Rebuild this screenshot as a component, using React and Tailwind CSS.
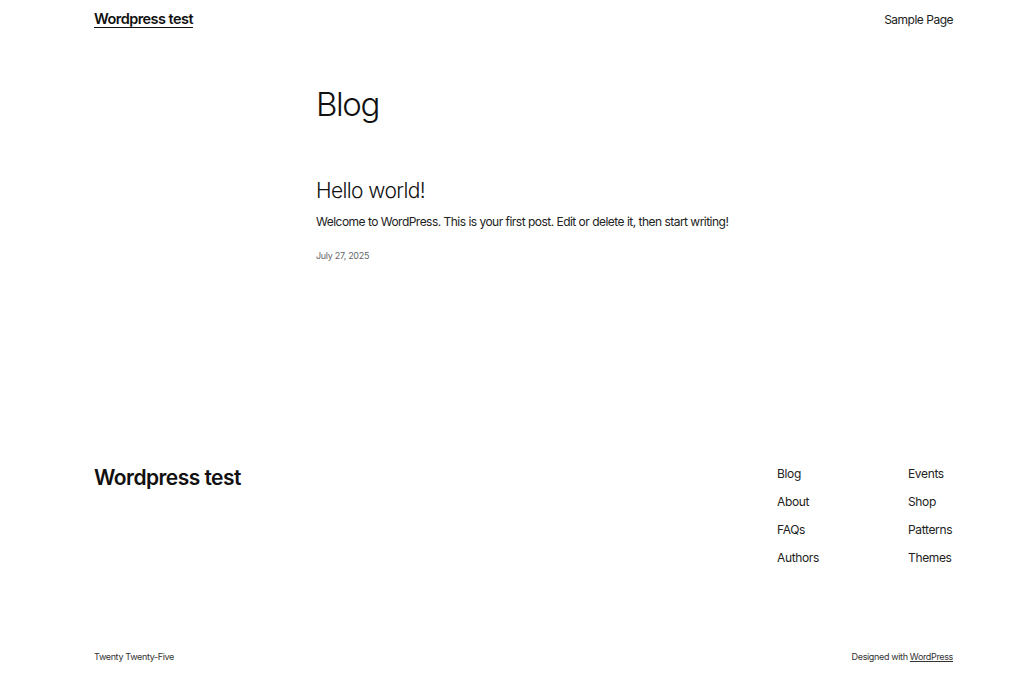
export default function App() {
  const navLeft = ['Blog', 'About', 'FAQs', 'Authors'];
  const navRight = ['Events', 'Shop', 'Patterns', 'Themes'];

  return (
    <div className="min-h-[673px] bg-white text-[#111111] flex flex-col" style={{ fontFamily: 'Inter, "Noto Sans", sans-serif' }}>
      <header className="flex items-center justify-between pl-[94px] pr-[71px] h-[38px]">
        <a href="#" className="text-[14.5px] font-semibold underline underline-offset-[3px] tracking-[-0.55px]">Wordpress test</a>
        <a href="#" className="text-[12px] text-[#222] tracking-[-0.5px] pt-[1px]">Sample Page</a>
      </header>

      <main className="pl-[316px] pr-[71px]">
        <h1 className="text-[33px] font-light leading-none mt-[50px] tracking-[-1.4px]">Blog</h1>
        <h2 className="text-[21px] font-light leading-none mt-[59px] tracking-[-0.6px]">Hello world!</h2>
        <p className="text-[12px] text-[#222] mt-[12px] leading-[18px] tracking-[-0.52px]">
          Welcome to WordPress. This is your first post. Edit or delete it, then start writing!
        </p>
        <div className="text-[9px] text-[#666] mt-[18px] tracking-[-0.3px]">July 27, 2025</div>
      </main>

      <footer className="pl-[94px] pr-[71px] mt-[202px]">
        <div className="flex justify-between">
          <div className="text-[21px] font-semibold leading-none pt-[2px] tracking-[-0.55px]">Wordpress test</div>
          <div className="flex gap-[89px]">
            <div className="flex flex-col gap-[11.3px] w-[42px] text-[12px] text-[#222] leading-[17px] tracking-[-0.35px]">
              {navLeft.map(n => <a key={n} href="#">{n}</a>)}
            </div>
            <div className="flex flex-col gap-[11.3px] w-[45px] text-[12px] text-[#222] leading-[17px] tracking-[-0.35px]">
              {navRight.map(n => <a key={n} href="#">{n}</a>)}
            </div>
          </div>
        </div>
        <div className="flex justify-between mt-[84px] text-[9px] text-[#333] tracking-[-0.35px]">
          <span>Twenty Twenty-Five</span>
          <span>Designed with <a href="#" className="underline">WordPress</a></span>
        </div>
      </footer>
    </div>
  );
}
